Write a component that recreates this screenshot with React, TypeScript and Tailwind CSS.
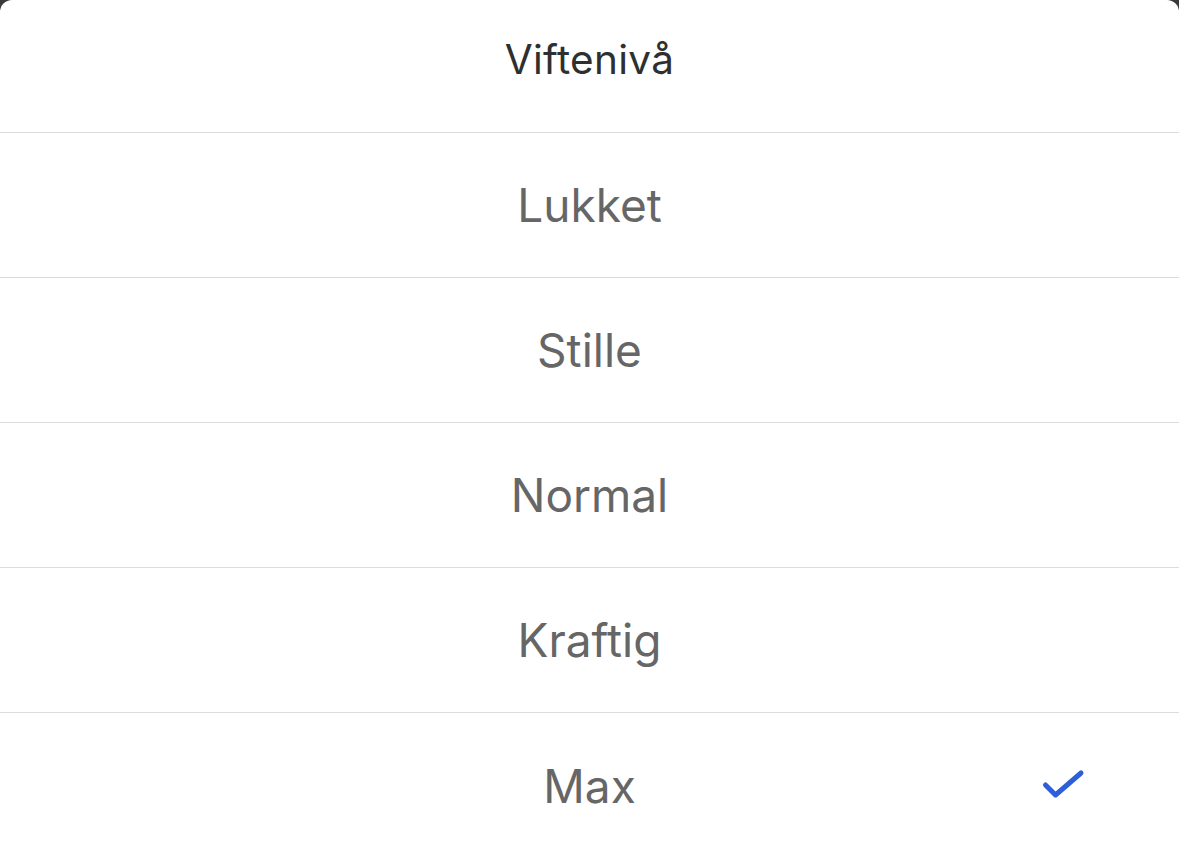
import React from "react";

const options = ["Lukket", "Stille", "Normal", "Kraftig", "Max"];
const selected = "Max";

export default function App() {
  return (
    <div className="h-[853px] w-[1179px] overflow-hidden bg-[#3a3a3a]">
      <div
        className="h-full w-full rounded-t-[12px] bg-white"
        style={{ fontFamily: "Inter, 'Noto Sans', sans-serif" }}
      >
        <div className="flex h-[133px] items-center justify-center border-b border-[#dcdcdc] pb-[12px]">
          <span className="text-[40.5px] leading-none tracking-[0.3px] text-[#2f2f2f]">Viftenivå</span>
        </div>
        {options.map((o) => (
          <div
            key={o}
            className="relative flex h-[145px] items-center justify-center border-b border-[#dcdcdc] last:border-b-0"
          >
            <span className="text-[46px] leading-none text-[#666666]">{o}</span>
            {o === selected && (
              <svg
                className="absolute left-[1040px] top-[54px]"
                width="46"
                height="36"
                viewBox="0 0 46 36"
                fill="none"
              >
                <path
                  d="M5.5 18 L15.5 28 L41 6"
                  stroke="#2d5fd8"
                  strokeWidth="5"
                  strokeLinecap="round"
                  strokeLinejoin="round"
                />
              </svg>
            )}
          </div>
        ))}
      </div>
    </div>
  );
}
